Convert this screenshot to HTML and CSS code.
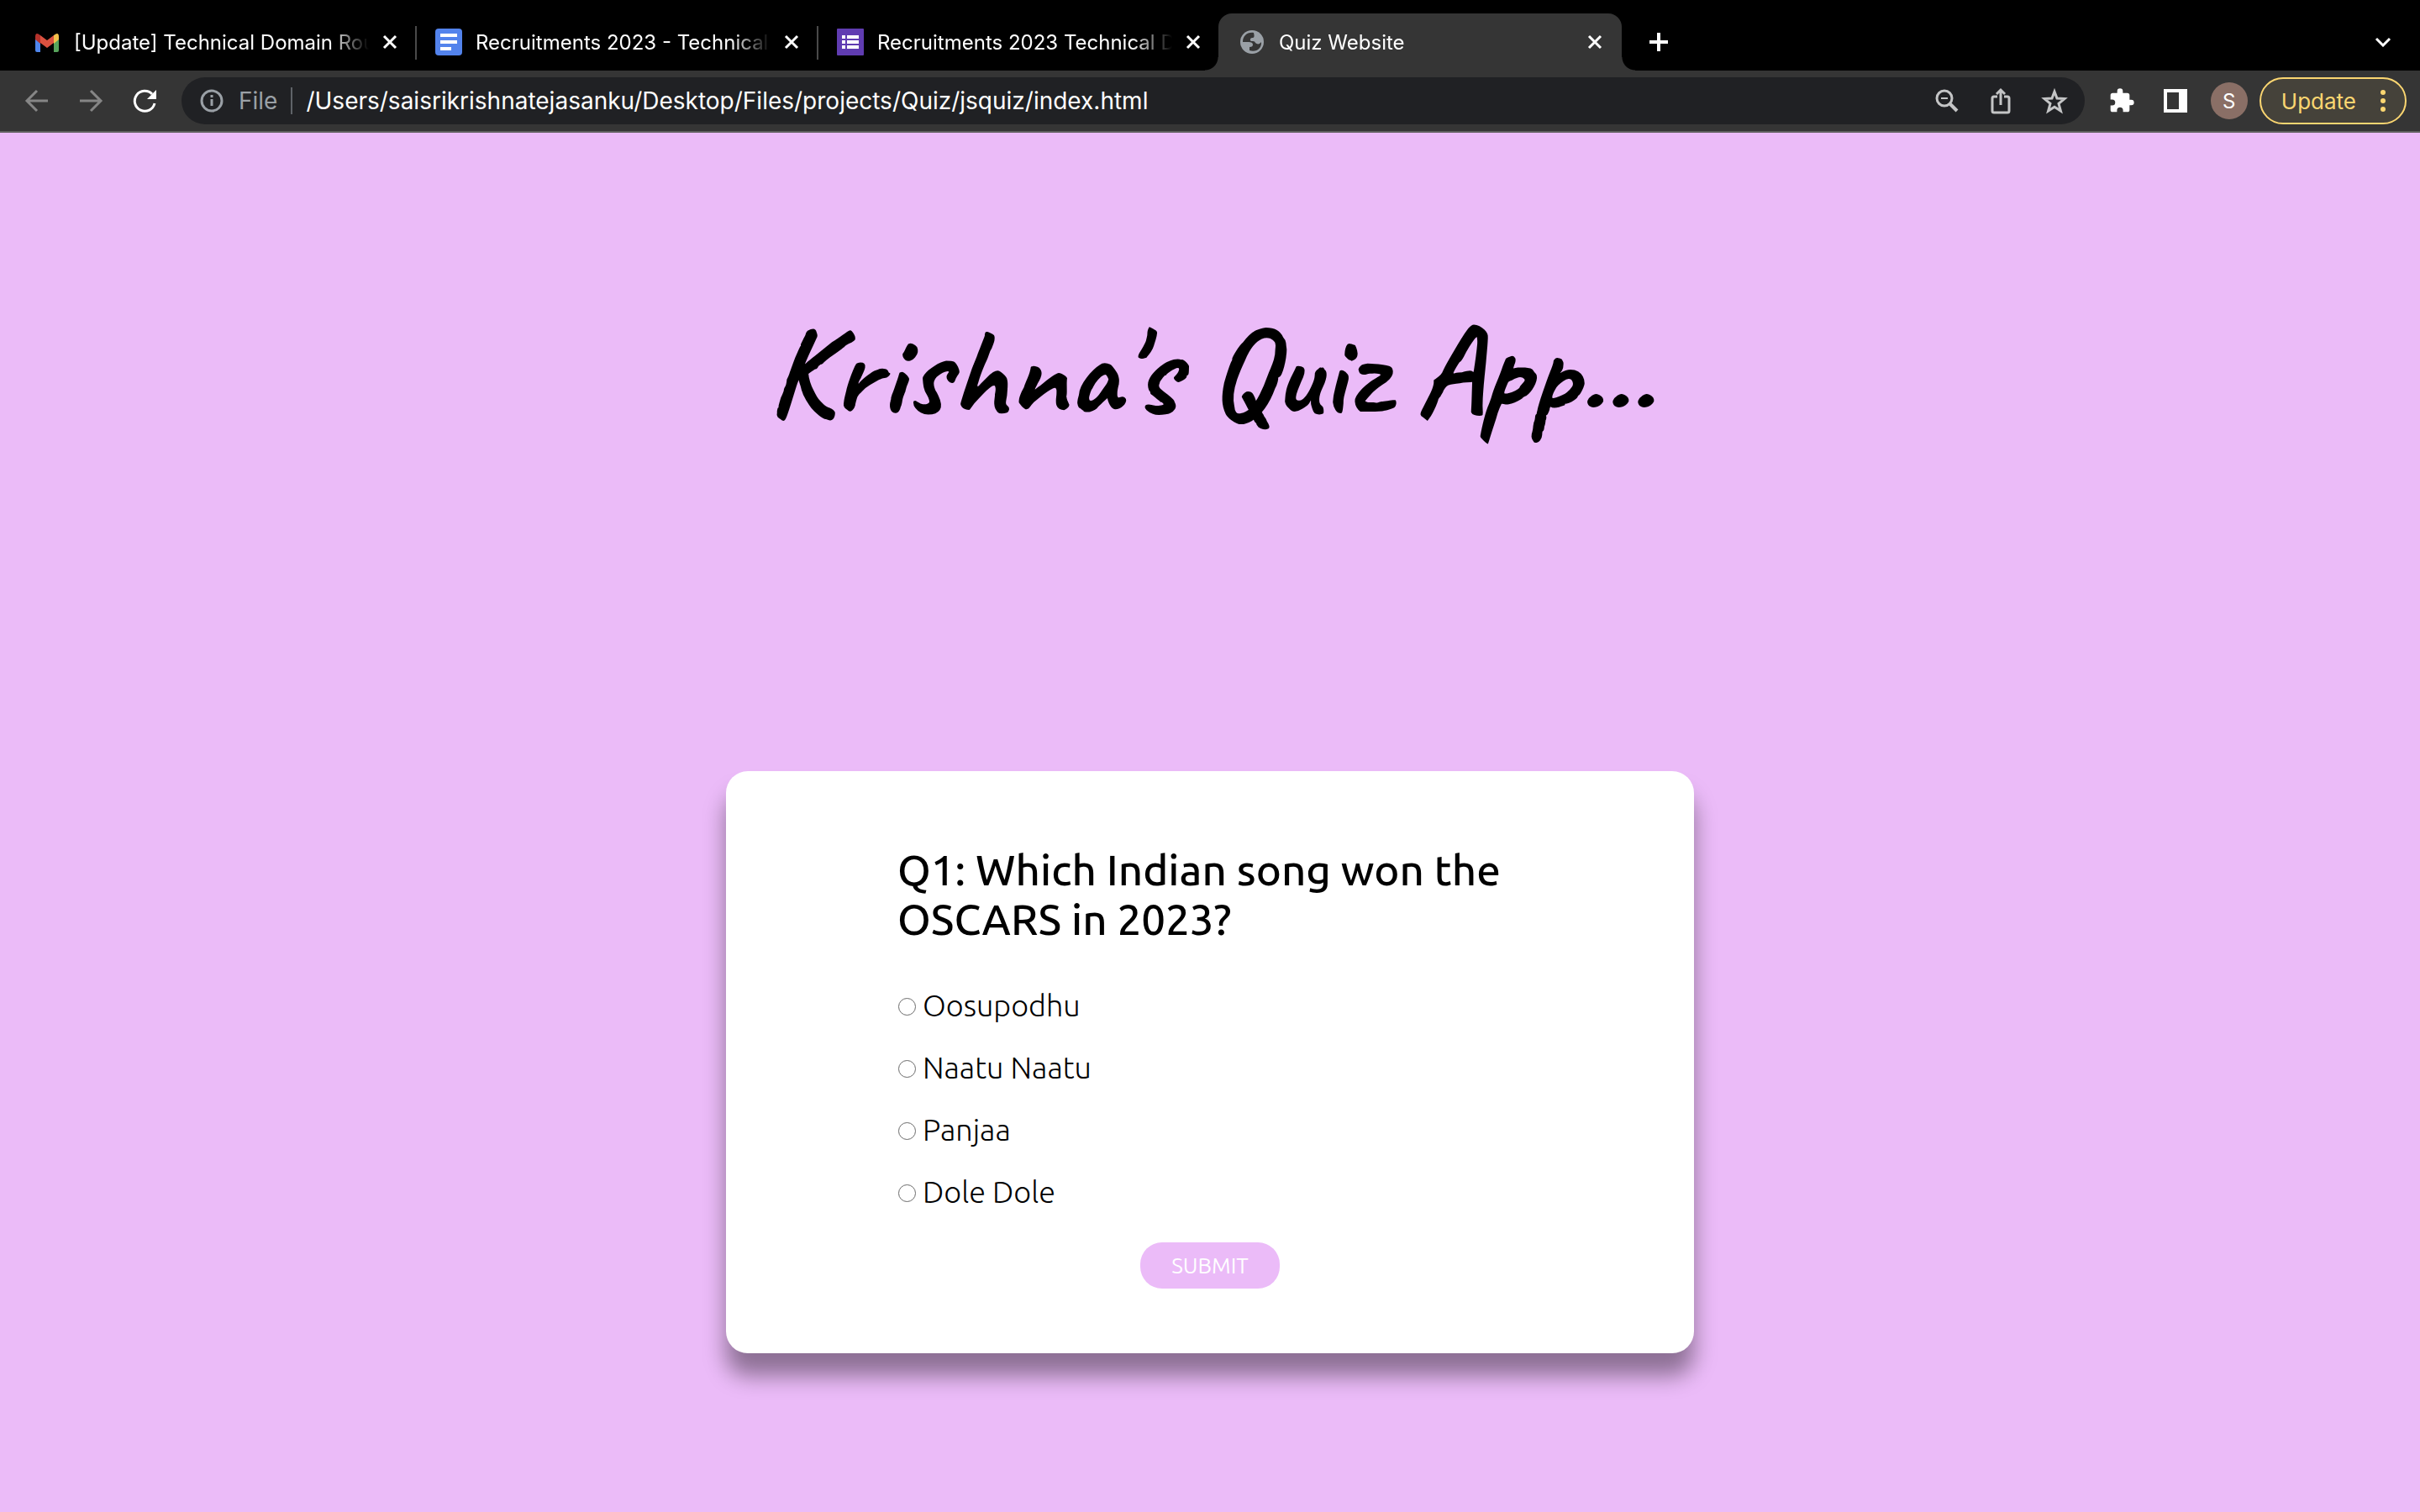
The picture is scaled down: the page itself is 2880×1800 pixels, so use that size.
FILE: index.html
```html
<!DOCTYPE html>
<html lang="en">
<head>
<meta charset="utf-8">
<title>Quiz Website</title>
<link rel="stylesheet" href="styles.css">
</head>
<body>
<header class="browser">
  <nav class="tabs" aria-label="Tabs">
    <div class="tab">
      <svg class="icon" viewBox="0 0 32 32"><path fill="#4f86ec" d="M2 10l6 4v14H4q-2 0-2-2z"/><path fill="#57a55c" d="M30 10l-6 4v14h4q2 0 2-2z"/><path fill="#f2c04b" d="M24 8q6-5 6 2v3l-6 5z"/><path fill="#b5322b" d="M8 8q-6-5-6 2v3l6 5z"/><path fill="#da5140" d="M8 8l8 6 8-6v9l-8 6-8-6z"/></svg>
      <span class="tab-title">[Update] Technical Domain Round</span>
      <button class="close" aria-label="Close tab"><svg viewBox="0 0 18 18"><path d="M2 2l14 14M16 2L2 16"/></svg></button>
    </div>
    <div class="tab">
      <svg class="icon" viewBox="0 0 32 32"><rect width="32" height="32" rx="4" fill="#5383ec"/><path stroke="#fff" stroke-width="4" d="M6 8h20M6 16h20M6 24h13"/></svg>
      <span class="tab-title">Recruitments 2023 - Technical Domain</span>
      <button class="close" aria-label="Close tab"><svg viewBox="0 0 18 18"><path d="M2 2l14 14M16 2L2 16"/></svg></button>
    </div>
    <div class="tab">
      <svg class="icon" viewBox="0 0 32 32"><rect width="32" height="32" rx="1" fill="#603cb1"/><path stroke="#fff" stroke-width="4" d="M6 10h4M12 10h14M6 16h4M12 16h14M6 22h4M12 22h14"/></svg>
      <span class="tab-title">Recruitments 2023 Technical Domain</span>
      <button class="close" aria-label="Close tab"><svg viewBox="0 0 18 18"><path d="M2 2l14 14M16 2L2 16"/></svg></button>
    </div>
    <div class="tab active">
      <svg class="icon" viewBox="0 0 32 32"><circle cx="16" cy="16" r="14" fill="#9aa0a6"/><path fill="#353535" d="M18 5C10 4 5 9 5 16h7c3 0 5 1 5 3 0 2-1 3-4 3v4c8 3 15-3 14-10-2 3-5 3-7 1-1-2-2-2-5-2-2-1-1-4 1-4 3 0 3-2 2-6z"/></svg>
      <span class="tab-title">Quiz Website</span>
      <button class="close" aria-label="Close tab"><svg viewBox="0 0 18 18"><path d="M2 2l14 14M16 2L2 16"/></svg></button>
    </div>
    <button class="new-tab" aria-label="New tab"><svg viewBox="0 0 24 24"><path d="M12 1v22M1 12h22"/></svg></button>
    <button class="tab-search" aria-label="Search tabs"><svg viewBox="0 0 20 12"><path d="M2 2l8 8 8-8"/></svg></button>
  </nav>
  <div class="toolbar">
    <div class="nav-buttons">
      <button class="tool dim" aria-label="Back"><svg viewBox="0 0 32 32"><path d="M29 16H4M16 4L4 16l12 12"/></svg></button>
      <button class="tool dim" aria-label="Forward"><svg viewBox="0 0 32 32"><path d="M3 16h25M16 4l12 12-12 12"/></svg></button>
      <button class="tool" aria-label="Reload"><svg viewBox="0 0 32 32"><path stroke-width="3" d="M25 8a12 12 0 1 0 3 11"/><path fill="#fff" stroke="none" d="M30 3v11H19z"/></svg></button>
    </div>
    <div class="address">
      <svg class="info" viewBox="0 0 28 28"><circle cx="14" cy="14" r="12"/><path d="M14 12v8M14 7v3"/></svg>
      <span class="scheme">File</span>
      <input class="url" type="text" aria-label="Address" value="/Users/saisrikrishnatejasanku/Desktop/Files/projects/Quiz/jsquiz/index.html">
      <button class="tool pale" aria-label="Zoom out"><svg viewBox="0 0 32 32"><circle cx="13" cy="13" r="9"/><path stroke-width="2" d="M9 13h8"/><path stroke-width="4" d="M20 20l8 8"/></svg></button>
      <button class="tool pale" aria-label="Share"><svg viewBox="0 0 32 32"><path d="M12 11H8q-2 0-2 2v15q0 2 2 2h16q2 0 2-2V13q0-2-2-2h-4M16 21V3M11 8l5-5 5 5"/></svg></button>
      <button class="tool pale" aria-label="Bookmark"><svg viewBox="0 0 32 32"><path d="M16 5l3 8 9 .6-7 5.800 2.400 8.600L16 23.200 8.600 28l2.400-8.600-7-5.800 9-.6z"/></svg></button>
    </div>
    <div class="actions">
      <button class="tool" aria-label="Extensions"><svg viewBox="0 0 24 24"><path fill="#fff" stroke="none" d="M20.500 11H19V7a2 2 0 0 0-2-2h-4V3.500a2.500 2.500 0 0 0-5 0V5H4a2 2 0 0 0-2 2v3.800h1.500a2.700 2.700 0 0 1 0 5.400H2V20a2 2 0 0 0 2 2h3.800v-1.500a2.700 2.700 0 0 1 5.400 0V22H17a2 2 0 0 0 2-2v-4h1.500a2.500 2.500 0 0 0 0-5z"/></svg></button>
      <button class="tool" aria-label="Side panel"><svg viewBox="0 0 32 32"><path fill="#fff" fill-rule="evenodd" stroke="none" d="M2 2h28v28H2zM6 6v20h14V6z"/></svg></button>
      <button class="avatar">S</button>
      <button class="update">Update <svg viewBox="0 0 8 32"><circle cx="4" cy="6" r="3"/><circle cx="4" cy="16" r="3"/><circle cx="4" cy="26" r="3"/></svg></button>
    </div>
  </div>
</header>
<main class="page">
  <h1 class="title">Krishna's Quiz App...</h1>
  <form class="card">
    <fieldset class="question">
      <legend class="prompt">Q1: Which Indian song won the OSCARS in 2023?</legend>
      <label class="option"><input type="radio" name="answer"> Oosupodhu</label>
      <label class="option"><input type="radio" name="answer"> Naatu Naatu</label>
      <label class="option"><input type="radio" name="answer"> Panjaa</label>
      <label class="option"><input type="radio" name="answer"> Dole Dole</label>
    </fieldset>
    <button class="submit" type="button">SUBMIT</button>
  </form>
</main>
</body>
</html>
```
FILE: styles.css
```css
* { box-sizing: border-box; }
body {
  margin: 0;
  min-height: 100vh;
  background: #ebbbf8;
  color: #000;
  font-family: Ubuntu, "Noto Sans", sans-serif;
}
button {
  border: 0;
  padding: 0;
  background: none;
  color: inherit;
  font: inherit;
}
svg { display: block; fill: none; }

.browser {
  color: #fff;
  font-family: Inter, sans-serif;
  font-size: 24px;
  border-bottom: 2px solid #5f5f5f;
  background: #353535;
}
.tabs {
  display: flex;
  height: 84px;
  padding: 16px 34px 0 16px;
  background: #000;
}
.tab {
  position: relative;
  display: flex;
  align-items: center;
  flex: 0 1 478px;
  min-width: 0;
  padding: 0 21px 0 24px;
}
.tab:nth-child(-n+2)::after {
  content: "";
  position: absolute;
  right: -2px;
  top: 15px;
  width: 2px;
  height: 40px;
  background: #4a4a4a;
}
.tab.active {
  flex-basis: 480px;
  padding-right: 23px;
  border-radius: 16px 16px 0 0;
  background: #353535;
}
.tab.active::before,
.tab.active::after {
  content: "";
  position: absolute;
  bottom: 0;
  width: 16px;
  height: 16px;
}
.tab.active::before {
  left: -16px;
  background: radial-gradient(circle at 0 0, #000 15px, #353535 16px);
}
.tab.active::after {
  right: -16px;
  background: radial-gradient(circle at 100% 0, #000 15px, #353535 16px);
}
.icon { flex: none; width: 32px; height: 32px; }
.tab-title {
  flex: 1;
  min-width: 0;
  margin: 0 16px;
  overflow: hidden;
  white-space: nowrap;
  mask-image: linear-gradient(to left, transparent, #000 48px);
}
.close svg { width: 18px; height: 18px; stroke: #fff; stroke-width: 3; }
.new-tab { margin-left: 32px; }
.new-tab svg { width: 24px; height: 24px; stroke: #fff; stroke-width: 4; }
.tab-search { margin-left: auto; }
.tab-search svg { width: 20px; height: 12px; stroke: #fff; stroke-width: 3; }

.toolbar {
  display: flex;
  align-items: center;
  height: 72px;
  padding: 0 16px 0 28px;
}
.tool svg { width: 32px; height: 32px; stroke: #fff; stroke-width: 3; }
.tool.dim svg { stroke: #868686; }
.tool.pale svg { stroke: #c4c5c6; }
.nav-buttons { display: flex; gap: 32px; }
.address {
  display: flex;
  align-items: center;
  flex: 1;
  height: 56px;
  margin: 0 28px;
  padding: 0 20px 0 22px;
  border-radius: 28px;
  background: #202124;
  gap: 32px;
  font-size: 28px;
}
.info { width: 28px; height: 28px; stroke: #9aa0a6; stroke-width: 3; }
.scheme {
  margin-left: -14px;
  padding-right: 16px;
  border-right: 2px solid #5f6368;
  color: #9aa0a6;
  line-height: 32px;
}
.url {
  flex: 1;
  min-width: 0;
  margin-left: -16px;
  padding: 0;
  border: 0;
  outline: 0;
  background: none;
  color: #fff;
  font: inherit;
}
.actions { display: flex; align-items: center; gap: 32px; }
.avatar {
  width: 44px;
  height: 44px;
  margin: 0 -18px 0 -6px;
  border-radius: 50%;
  background: #8a6f66;
}
.update {
  display: flex;
  align-items: center;
  gap: 28px;
  height: 56px;
  padding: 0 22px 0 24px;
  border: 2px solid #fbd671;
  border-radius: 28px;
  background: #45423a;
  color: #fbd671;
  font-size: 26px;
}
.update svg { width: 8px; height: 32px; fill: #fbd671; }

.page {
  display: flex;
  flex-direction: column;
  align-items: center;
}
.title {
  margin: 184px 0 376px;
  font-family: Caveat, Lato, cursive;
  font-size: 152px;
  font-weight: 700;
  line-height: 200px;
}
.card {
  display: flex;
  flex-direction: column;
  align-items: center;
  width: 40%;
  padding: 88px 204px 77px;
  border-radius: 26px;
  background: #fff;
  box-shadow: 0 27px 27px rgba(0, 0, 0, .4);
}
.question {
  align-self: stretch;
  margin: 0;
  padding: 0;
  border: 0;
}
.prompt {
  padding: 0;
  margin-bottom: 51px;
  font-size: 51px;
  font-weight: 500;
  line-height: 59px;
}
.option {
  display: flex;
  align-items: center;
  gap: 8px;
  height: 42px;
  margin-bottom: 32px;
  font-size: 36px;
  font-weight: 300;
}
.option input {
  appearance: none;
  width: 21px;
  height: 21px;
  margin: 4px 0 0 1px;
  border: 1px solid #6a6a6a;
  border-radius: 50%;
}
.submit {
  height: 55px;
  margin-top: 8px;
  padding: 0 37px;
  border-radius: 26px;
  background: #ebbbf8;
  color: #fff;
  font-size: 26px;
  font-weight: 400;
}
```
